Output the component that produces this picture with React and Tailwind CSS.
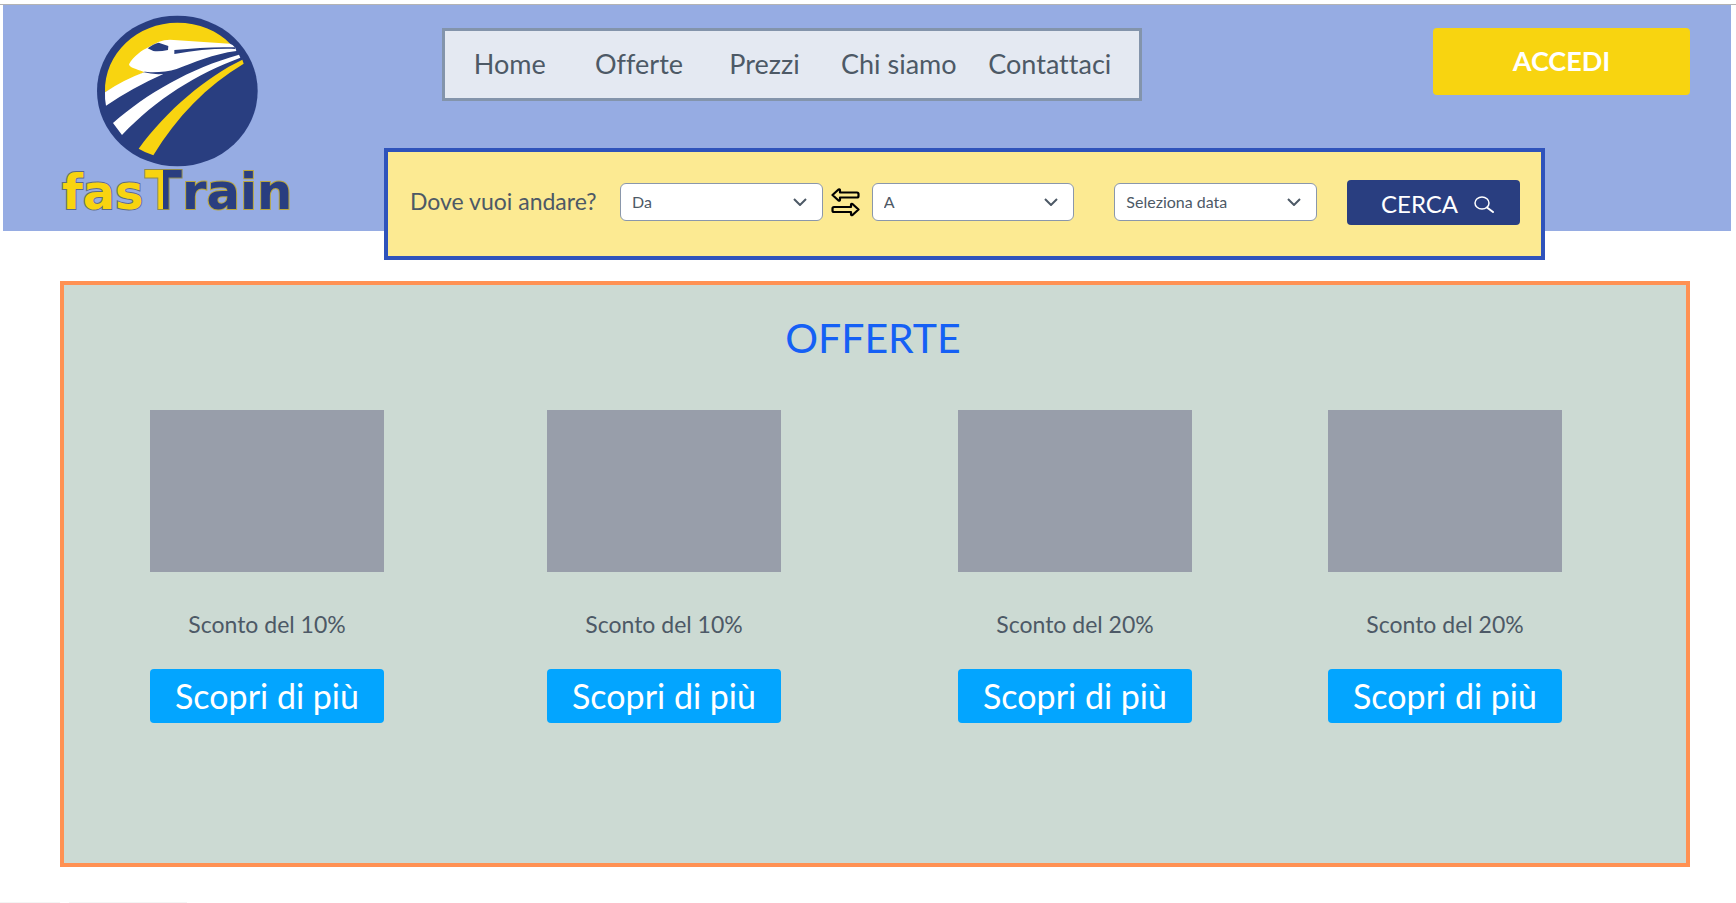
import React from "react";

const links = ["Home", "Offerte", "Prezzi", "Chi siamo", "Contattaci"];

const offers = [
  { id: 1, text: "Sconto del 10%" },
  { id: 2, text: "Sconto del 10%" },
  { id: 3, text: "Sconto del 20%" },
  { id: 4, text: "Sconto del 20%" },
];

function Logo() {
  return (
    <svg viewBox="171 45 720 648" className="h-[216px] w-[240px]" role="img" aria-label="fasTrain">
      <defs>
        <linearGradient id="split" gradientUnits="userSpaceOnUse" x1="433" x2="552" y1="0" y2="0">
          <stop offset="0.47" stopColor="#f8d410" />
          <stop offset="0.47" stopColor="#293e80" />
        </linearGradient>
      </defs>
      <ellipse cx="532" cy="273" rx="241" ry="226" fill="#293e80" />
      <path d="M315 277C312 160 412 68 532 68C596 68 655 92 691 132L500 130L430 218Q370 245 315 277Z" fill="#f8d410" />
      <path d="M387 193C400 168 428 150 445 142C468 128 486 119 510 119L690 131Q697 133 706 143L709 153C640 162 580 188 530 207C500 217 455 218 430 215C410 208 388 203 387 193Z" fill="#fff" />
      <path d="M443 145C453 137 466 130 476 128L505 138L504 150Q480 155 460 153Z" fill="#293e80" />
      <path d="M523 150C590 143 650 140 706 142V147C650 145 590 150 523 162Z" fill="#293e80" />
      <path d="M315 277Q370 240 432 217Q455 224 490 222Q400 262 318 317Q314 300 315 277Z" fill="#fff" />
      <path d="M339 369C440 280 570 205 717 164L721 173C590 222 470 295 366 405Z" fill="#fff" />
      <path d="M416 446C500 330 620 230 727 179L731 191C620 258 530 350 460 466Q436 458 416 446Z" fill="#f8d410" />
      <g
        fontFamily="'DejaVu Sans', sans-serif"
        fontWeight="700"
        strokeWidth="6"
        paintOrder="stroke"
      >
        <text x="186" y="628" fontSize="143" fill="#f8d410" stroke="#5d6b86">fas</text>
        <text x="435" y="628" fontSize="162" fill="url(#split)" stroke="#8f8b4c">T</text>
        <text x="546" y="628" fontSize="149" fill="#293e80" stroke="#b9a63c">rain</text>
      </g>
    </svg>
  );
}

function SwapIcon() {
  const arrow = "M1.5 7L7.5 1.5Q9 1 9 2.5V4.5H26Q27.500 4.500 27.500 6V8Q27.500 9.500 26 9.500H9V11.500Q9 13 7.500 12.500Z";
  return (
    <svg viewBox="0 0 29 29" className="h-[29px] w-[29px]" fill="none" stroke="#000" strokeWidth="2.200" strokeLinejoin="round" aria-hidden="true">
      <path d={arrow} />
      <path d={arrow} transform="rotate(180 14.5 14.25)" />
    </svg>
  );
}

function SelectBox({ label }) {
  return (
    <div className="relative h-[38px] min-w-0 flex-[203_1_0px]">
      <select
        aria-label={label}
        className="h-full w-full appearance-none rounded-md border border-[#8a97ab] bg-white pl-[11px] pr-9 text-base text-[#4d5966]"
      >
        <option>{label}</option>
      </select>
      <svg viewBox="0 0 14 8" className="pointer-events-none absolute right-4 top-[15px] h-2 w-[14px]" fill="none" stroke="#4d5966" strokeWidth="2" aria-hidden="true">
        <path d="M1 1L7 7L13 1" />
      </svg>
    </div>
  );
}

export default function App() {
  return (
    <div className="mt-1 border-t border-[#b3b3b3] bg-white font-['Lato',sans-serif] text-[#4d5966] [font-variant-ligatures:none]">
      <header className="ml-[3px] mr-[5px] flex items-start bg-[#96ace3]">
        <a href="#" className="ml-[54px] mr-[87px] mt-[10px] shrink-0">
          <Logo />
        </a>
        <div className="min-w-0 flex-1 pt-[23px]">
          <div className="ml-[58px] mr-[41px] flex items-start justify-between">
            <nav className="grid h-[73px] w-[700px] grid-cols-[129fr_129fr_121fr_147fr_154fr] items-center border-[3px] border-[#8394ab] bg-[#e4e9f2] pb-0.5 pr-3 text-center text-[27px] leading-8">
              {links.map((link) => (
                <a key={link} href="#" className="whitespace-nowrap">{link}</a>
              ))}
            </nav>
            <button type="button" className="h-[67px] w-[257px] rounded bg-[#f8d410] pb-0.5 text-[27px] font-bold leading-8 text-white">
              ACCEDI
            </button>
          </div>
          <form className="-mb-[29px] mr-[186px] mt-[47px] flex h-28 items-center border-4 border-[#2f53bb] bg-[#fcea92] pb-1 pl-[22px] pr-[21px]">
            <span className="w-[210px] shrink-0 whitespace-nowrap pb-0.5 text-[23px] leading-8">Dove vuoi andare?</span>
            <SelectBox label="Da" />
            <button type="button" aria-label="Inverti" className="ml-2 mr-3 shrink-0">
              <SwapIcon />
            </button>
            <SelectBox label="A" />
            <div className="w-10 shrink-0" />
            <SelectBox label="Seleziona data" />
            <button type="submit" className="ml-[30px] flex h-[45px] w-[173px] shrink-0 items-center justify-center gap-4 rounded bg-[#293e80] pl-2 pt-1 text-2xl text-white">
              CERCA
              <svg viewBox="0 0 20 17" className="h-[17px] w-5" fill="none" stroke="currentColor" strokeWidth="1.500" strokeLinecap="round" aria-hidden="true">
                <ellipse cx="8" cy="7" rx="7" ry="6" />
                <path d="M13 11.500L19 16" strokeWidth="2" />
              </svg>
            </button>
          </form>
        </div>
      </header>

      <main className="ml-[60px] mr-[46px] mt-[50px] border-4 border-[#ff9153] bg-[#ccdad3] pb-[140px] pt-[27px]">
        <h1 className="pr-1 text-center text-[41px] leading-[52px] text-[#1560f5]">OFFERTE</h1>
        <div className="mt-[46px] grid grid-cols-[397fr_411fr_370fr_358fr] pl-[86px]">
          {offers.map((offer) => (
            <article key={offer.id} className="w-[234px] text-center">
              <div className="h-[162px] bg-[#989eaa]" />
              <p className="mt-9 text-[23px] leading-8">{offer.text}</p>
              <button type="button" className="mt-[29px] h-[54px] w-full rounded bg-[#03a5ff] text-[34px] leading-10 text-white">
                Scopri di più
              </button>
            </article>
          ))}
        </div>
      </main>

      <footer className="mt-[35px] flex gap-[9px]">
        <div className="h-px w-[60px] bg-[#f4f4f4]" />
        <div className="h-px w-[118px] bg-[#f4f4f4]" />
      </footer>
    </div>
  );
}
